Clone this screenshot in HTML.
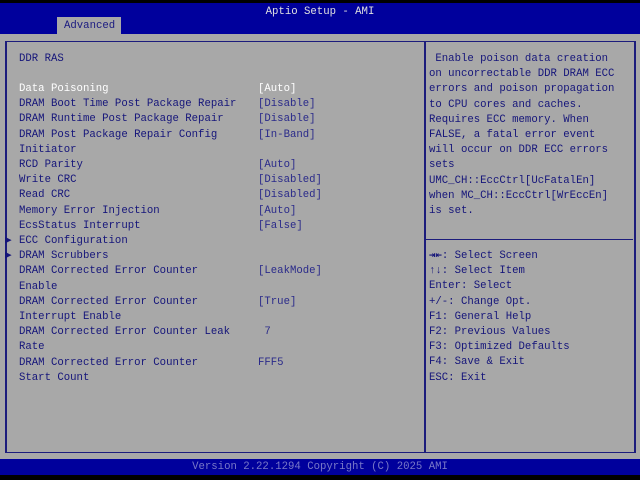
<!DOCTYPE html>
<html><head><style>
*{margin:0;padding:0}
body{width:640px;height:480px;background:#000;position:relative;overflow:hidden;font-family:"Liberation Mono","DejaVu Sans Mono",monospace;font-size:10.67px;color:#15157a}
.a{position:absolute;white-space:pre;line-height:15.2px}
#hdr{position:absolute;left:0;top:3px;width:640px;height:31px;background:#00009c}
#tab{position:absolute;left:57px;top:17px;width:64px;height:17px;background:#a8a8a8;color:#1a1a80}
#body{position:absolute;left:0;top:34px;width:640px;height:425px;background:#a8a8a8}
#frame{position:absolute;left:5px;top:41px;width:627px;height:410px;border:1px solid #1c1c7c;border-left-width:2px;border-right-width:2px}
#div{position:absolute;left:424px;top:41px;width:2px;height:412px;background:#1c1c7c}
#hl{position:absolute;left:426px;top:239px;width:207px;height:1px;background:#1c1c7c}
#ftr{position:absolute;left:0;top:459px;width:640px;height:16px;background:#00009c;color:#7878c8;text-align:center;line-height:17px}
.w{color:#fff}
.v{color:#2a2a8a}
</style></head><body>
<div id="hdr"></div>
<div class="a" style="left:0;top:5px;width:640px;text-align:center;color:#e0e0e0">Aptio Setup - AMI</div>
<div id="tab"><div class="a" style="left:7px;top:2px">Advanced</div></div>
<div id="body"></div>
<div id="frame"></div>
<div id="div"></div>
<div id="hl"></div>
<div class="a" style="left:19px;top:52px">DDR RAS</div>
<div class="a" style="left:19px;top:82px"><span class="w">Data Poisoning</span>
DRAM Boot Time Post Package Repair
DRAM Runtime Post Package Repair
DRAM Post Package Repair Config
Initiator
RCD Parity
Write CRC
Read CRC
Memory Error Injection
EcsStatus Interrupt
ECC Configuration
DRAM Scrubbers
DRAM Corrected Error Counter
Enable
DRAM Corrected Error Counter
Interrupt Enable
DRAM Corrected Error Counter Leak
Rate
DRAM Corrected Error Counter
Start Count</div>
<div class="a" style="left:5px;top:234px;font-size:11px">▶
▶</div>
<div class="a v" style="left:258px;top:82px"><span class="w">[Auto]</span>
[Disable]
[Disable]
[In-Band]

[Auto]
[Disabled]
[Disabled]
[Auto]
[False]


[LeakMode]

[True]

 7

FFF5</div>
<div class="a" style="left:429px;top:52px"> Enable poison data creation
on uncorrectable DDR DRAM ECC
errors and poison propagation
to CPU cores and caches.
Requires ECC memory. When
FALSE, a fatal error event
will occur on DDR ECC errors
sets
UMC_CH::EccCtrl[UcFatalEn]
when MC_CH::EccCtrl[WrEccEn]
is set.</div>
<div class="a" style="left:429px;top:249px"><b>⇥⇤</b>: Select Screen
<b>↑↓</b>: Select Item
Enter: Select
+/-: Change Opt.
F1: General Help
F2: Previous Values
F3: Optimized Defaults
F4: Save &amp; Exit
ESC: Exit</div>
<div id="ftr">Version 2.22.1294 Copyright (C) 2025 AMI</div>
</body></html>
